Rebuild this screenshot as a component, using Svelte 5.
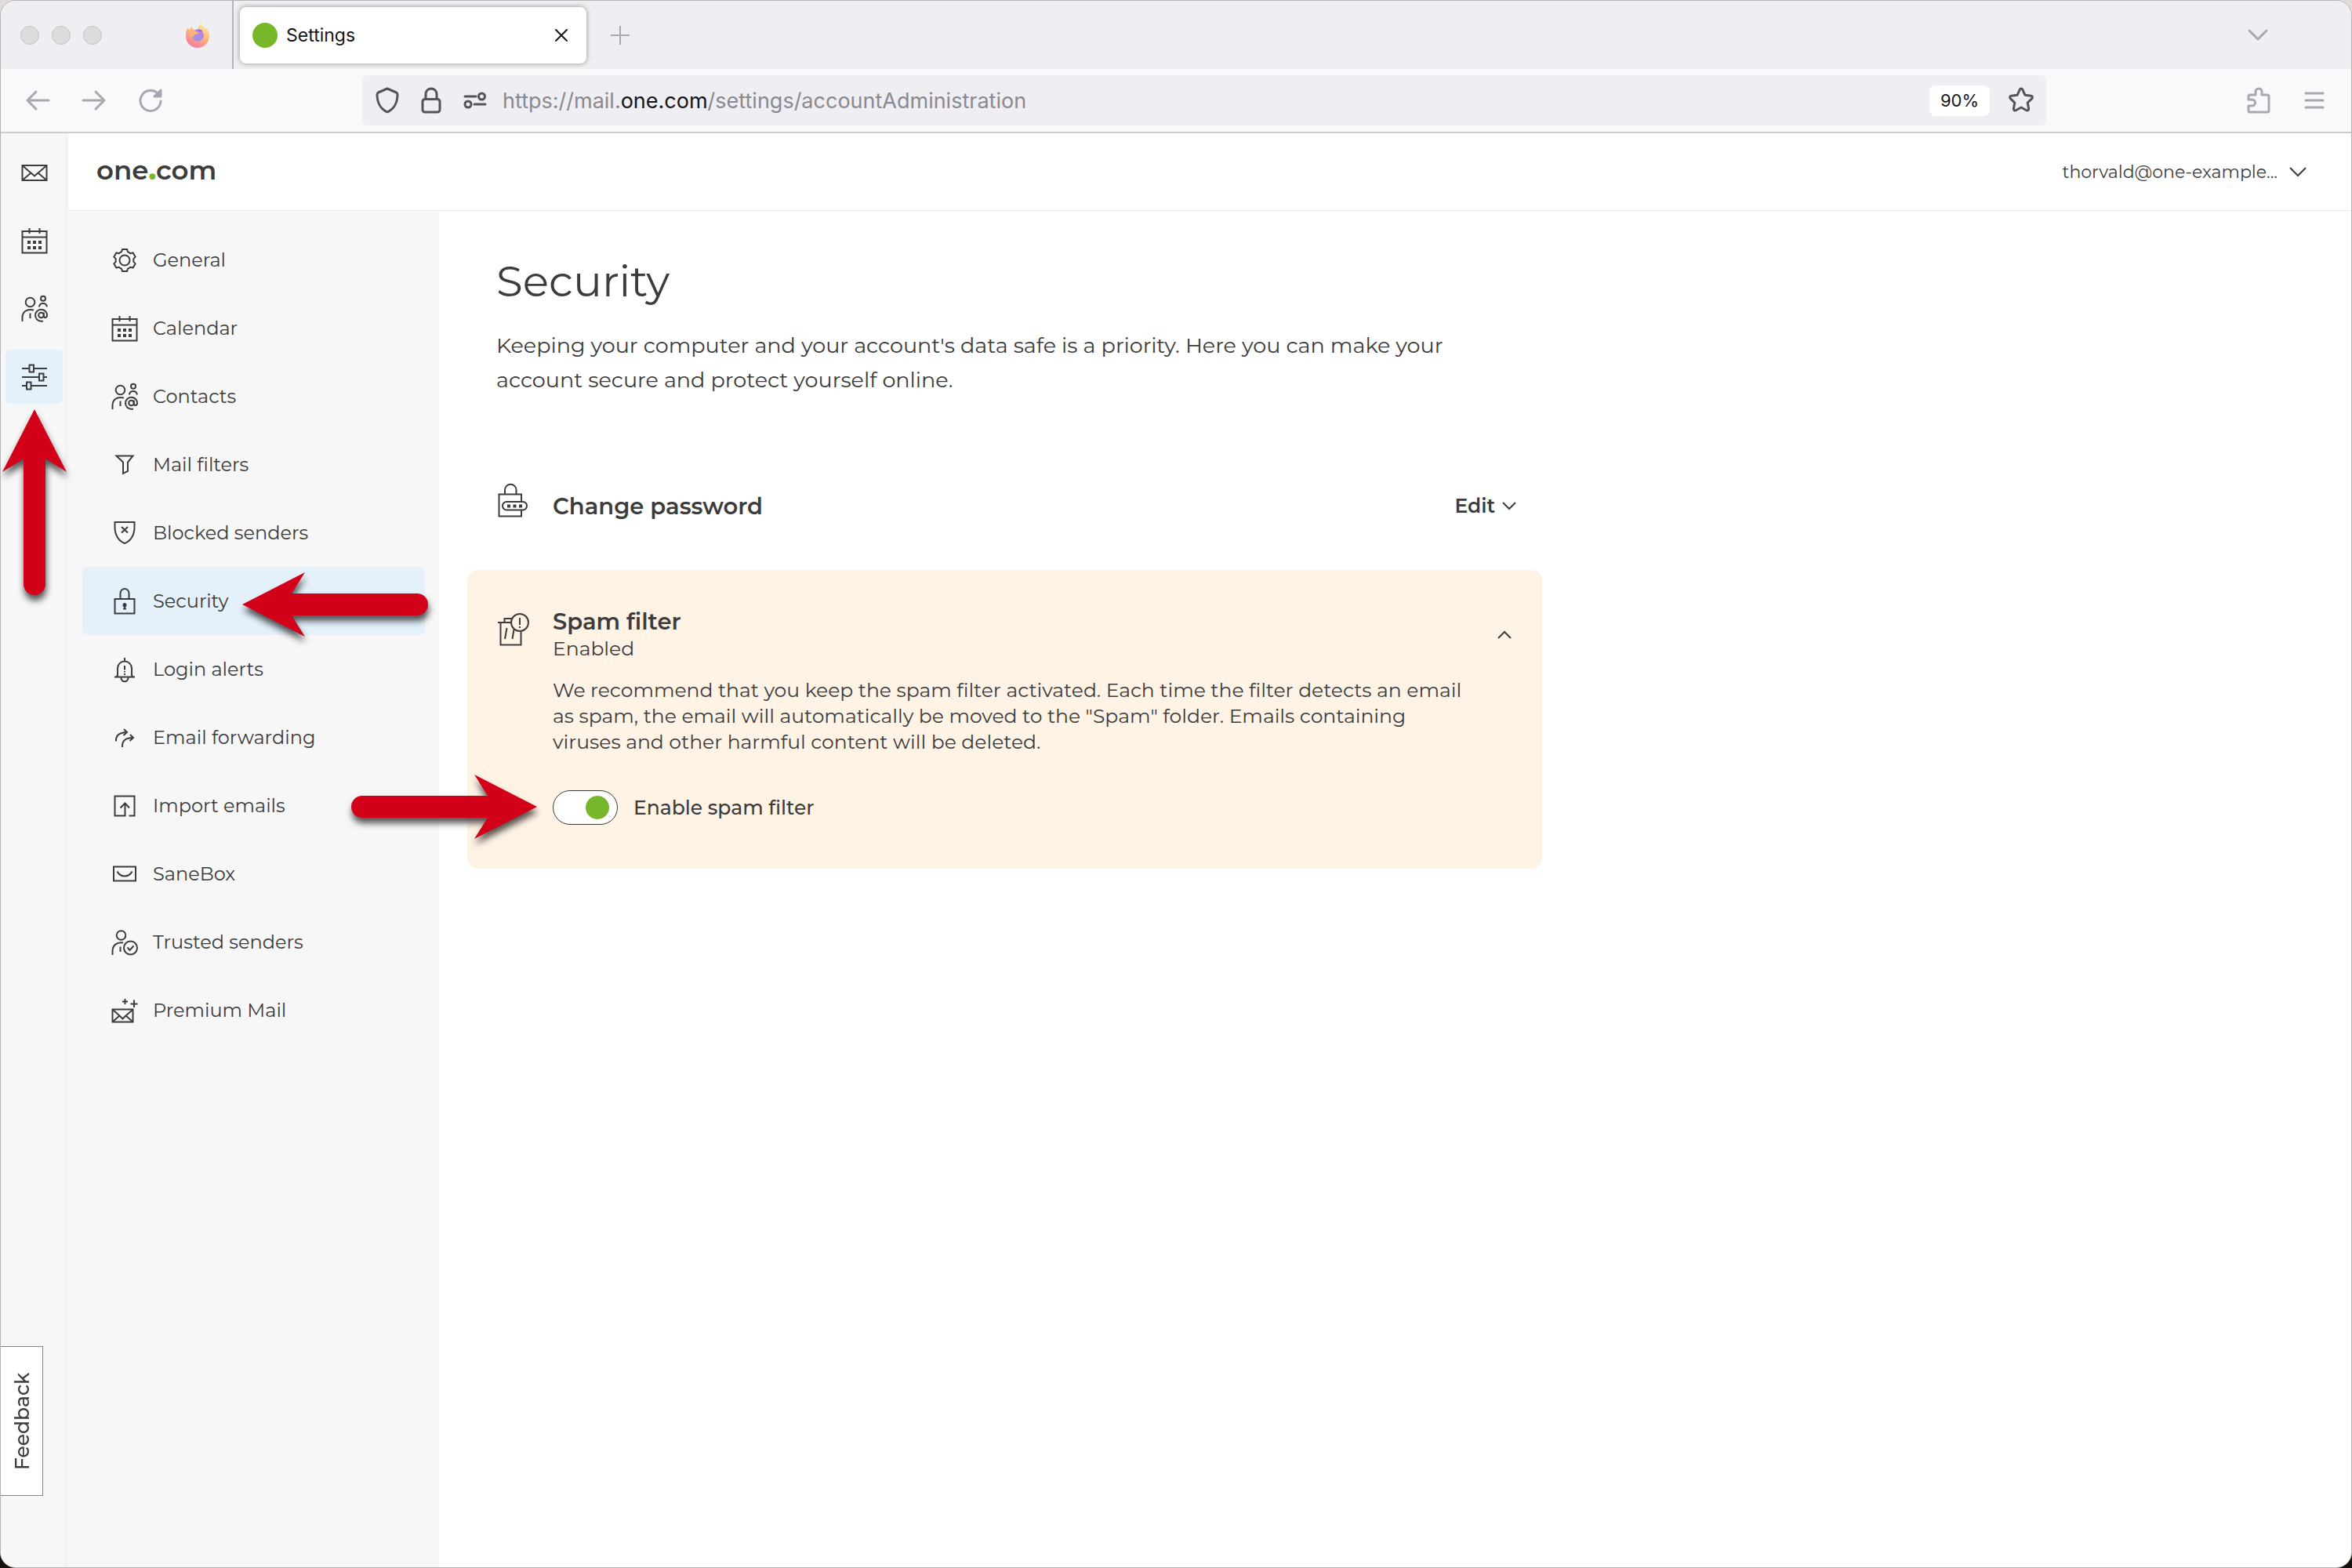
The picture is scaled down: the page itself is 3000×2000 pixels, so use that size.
<script lang="ts">
  const envelope =
    '<rect x="2.5" y="9" width="31" height="19"/><path d="M3 9.500l12 10.500M33 9.500L21 20M3 27.500l10.500-9M33 27.500l-10.500-9M13.500 18.500l4.500 4 4.500-4"/>';

  const icons: Record<string, string> = {
    mail: envelope,
    general:
      '<path d="M15 4h6l1 3.200 3.350 1.940 3.270-.740 3 5.200-2.270 2.460v3.880l2.270 2.460-3 5.200-3.270-.740L22 28.800 21 32h-6l-1-3.200-3.350-1.940-3.270.740-3-5.200 2.270-2.460v-3.880L4.380 13.600l3-5.200 3.270.740L14 7.200z"/><circle cx="18" cy="18" r="6.500"/>',
    calendar:
      '<rect x="2.500" y="6" width="31" height="27.500"/><path d="M2.500 13.500h31M11.500 2v7M24.500 2v7"/><path class="dots" d="M9 18h4v4H9zM16 18h4v4h-4zM23 18h4v4h-4zM9 25h4v4H9zM16 25h4v4h-4zM23 25h4v4h-4z"/>',
    contacts:
      '<circle cx="12.500" cy="9.500" r="5.800"/><circle cx="29" cy="4.800" r="3"/><path d="M24 15.500c0-6 9.800-6 9.800 0M2.500 34v-4.500c0-8 5.500-12 14.500-10M12.500 23.500V30"/><circle cx="26.500" cy="26" r="3.300"/><path d="M29.800 22.500V27c0 3 4.200 2.500 4.200-1a7.500 7.500 0 1 0-7.500 7.700H29"/>',
    settings:
      '<path d="M2 7h9M17 7h17M2 18h21.500M30 18h4M2 29h6M14 29h20"/><rect x="11.500" y="2.500" width="5.500" height="9"/><rect x="24" y="13.500" width="5.500" height="9"/><rect x="8" y="24.500" width="5.500" height="9"/>',
    filters: '<path d="M7.500 6.500h21l-6.500 8V26l-6 3V14.500z"/>',
    blocked:
      '<path d="M5.500 4h25v6.500c0 10-5 18-12.500 20.500C10.500 28.500 5.500 20.500 5.500 10.500z"/><path d="M14 10l8 7.500M22 10l-8 7.500"/>',
    security:
      '<rect x="5.500" y="15" width="25" height="18.500"/><path d="M12.500 15V7.500a5.500 5.500 0 0 1 11 0V15"/><path class="dots" d="M18 20a2.800 2.800 0 0 1 1.200 5.200V27H20v1.500h-4V27h.8v-1.800A2.800 2.800 0 0 1 18 20z"/>',
    alerts:
      '<path d="M5 27.500h26M18 3v4.500M6 27.500c2 0 3-1 3-3V16.500a9 9 0 0 1 18 0v8c0 2 1 3 3 3M13.500 28c0 7 9 7 9 0M18 13v5.500M18 20v1.500M18 23v2"/>',
    forwarding:
      '<path d="M7 22.500C6.500 15 11 11.500 20.500 11M17 7l4 4-4.500 4M15 30c-.5-8 4-12 13.500-12M25 14l4 4-4.500 4"/>',
    imports: '<path d="M23.500 30.500h7v-25h-25v25h13V15M12.500 20.500l6-6 5.500 6"/>',
    sanebox: '<rect x="4" y="8.500" width="28" height="18"/><path d="M8.500 14.500c4 8 15 8 19 0"/>',
    trusted:
      '<circle cx="13.500" cy="9" r="5.800"/><path d="M2.500 34v-4.500c0-8 5.500-12 13.500-11M12.500 23.500V30"/><circle cx="25.500" cy="25" r="8.500"/><path d="M21.500 24.500l3 3.500 5-5.500"/>',
    premium:
      '<rect x="2.500" y="16.500" width="26" height="16"/><path d="M3 17l9.500 8.500M28 17l-9.500 8.500M3 32l8.500-7.500M28 32l-8.500-7.500M11.500 24.500l4 4 4-4M18.500 3v7M15 6.500h7M30 4.500v9.500M25.500 9.500h9"/>',
  };

  const apps = [
    { icon: "mail", label: "Mail" },
    { icon: "calendar", label: "Calendar" },
    { icon: "contacts", label: "Contacts" },
    { icon: "settings", label: "Settings" },
  ];

  const sections = [
    { icon: "general", label: "General" },
    { icon: "calendar", label: "Calendar" },
    { icon: "contacts", label: "Contacts" },
    { icon: "filters", label: "Mail filters" },
    { icon: "blocked", label: "Blocked senders" },
    { icon: "security", label: "Security" },
    { icon: "alerts", label: "Login alerts" },
    { icon: "forwarding", label: "Email forwarding" },
    { icon: "imports", label: "Import emails" },
    { icon: "sanebox", label: "SaneBox" },
    { icon: "trusted", label: "Trusted senders" },
    { icon: "premium", label: "Premium Mail" },
  ];

  let currentApp = $state("settings");
  let currentSection = $state("security");
  let spamFilter = $state(true);
  let spamOpen = $state(true);
</script>

{#snippet icon(name: string)}
  <svg class="icon" viewBox="0 0 36 36" aria-hidden="true">{@html icons[name]}</svg>
{/snippet}

{#snippet arrow(direction: string)}
  <span class="arrow {direction}">
    <svg viewBox="0 0 237 82" aria-hidden="true">
      <path d="M237 41L157 0l17 27H14a14 14 0 0 0 0 28h160l-17 27z" />
    </svg>
  </span>
{/snippet}

<div class="window">
  <div class="tabs">
    <div class="lights"><i></i><i></i><i></i></div>
    <svg class="firefox" viewBox="0 0 32 34" aria-hidden="true">
      <defs>
        <linearGradient id="flame" x1="0.8" y1="0" x2="0.3" y2="1">
          <stop offset="0" stop-color="#fdf29a" />
          <stop offset="0.45" stop-color="#fcbb80" />
          <stop offset="0.75" stop-color="#fa938f" />
          <stop offset="1" stop-color="#f279a8" />
        </linearGradient>
        <linearGradient id="globe" x1="0.7" y1="0" x2="0.3" y2="1">
          <stop offset="0" stop-color="#c07fe8" />
          <stop offset="1" stop-color="#9b93e0" />
        </linearGradient>
      </defs>
      <path
        fill="url(#flame)"
        d="M4 7c.3 1.500 1 2.600 2 3.200C6.500 8.500 7.300 7 8.500 6c.3 1.800 1.200 3 2.800 3.800h5.200C17 6 18.300 3 20.500 1c.8 3.500 3.600 5.500 6 8 .1-1 0-1.800-.3-2.600C29.600 9.400 31 13.500 31 18c0 8.500-6.700 15-15 15S1 26.500 1 18c0-4.500.8-8 3-11z"
      />
      <circle cx="16.500" cy="17" r="7.500" fill="url(#globe)" />
      <path fill="#fcb277" d="M5 11c3-1.500 7-1 9 1.500l4 .5c-.5 1.800-2.500 2.600-5 3-.8 1.500-2.500 2-4 3.500L5 17z" />
      <path fill="#9a6fe0" d="M15 10c2.500-1 5.500-.500 7.500 1.500l-4 1z" />
    </svg>
    <div class="tab">
      <span class="favicon"></span>
      <span class="tab-title">Settings</span>
      <button aria-label="Close tab">
        <svg width="18" height="18" viewBox="0 0 18 18"><path d="M2 2l14 14M16 2L2 16" /></svg>
      </button>
    </div>
    <button class="new-tab" aria-label="New tab">
      <svg width="24" height="24" viewBox="0 0 24 24"><path d="M12 0v24M0 12h24" /></svg>
    </button>
    <button class="all-tabs" aria-label="List all tabs">
      <svg width="26" height="16" viewBox="0 0 26 16"><path d="M2 2l11 11L24 2" /></svg>
    </button>
  </div>

  <div class="toolbar">
    <div class="history">
      <button aria-label="Back">
        <svg width="32" height="32" viewBox="0 0 32 32"><path d="M30 16H3M14 5L3 16l11 11" /></svg>
      </button>
      <button aria-label="Forward">
        <svg width="32" height="32" viewBox="0 0 32 32"><path d="M2 16h27M18 5l11 11-11 11" /></svg>
      </button>
      <button aria-label="Reload">
        <svg width="32" height="32" viewBox="0 0 32 32">
          <path d="M29 17a13 13 0 1 1-4-10" />
          <path class="fill" d="M29 3v8h-8z" />
        </svg>
      </button>
    </div>
    <div class="address">
      <svg width="30" height="34" viewBox="0 0 30 34">
        <path d="M15 2l11.500 5c1 .5 1.500 1.200 1.500 2.500C28 19 24 28 15 32 6 28 2 19 2 9.500 2 8.200 2.500 7.500 3.500 7z" />
      </svg>
      <svg width="26" height="34" viewBox="0 0 26 34">
        <rect x="2" y="15.500" width="22" height="16.500" rx="3" />
        <path d="M6 15V9a7 7 0 0 1 14 0v6" />
      </svg>
      <svg class="permissions" width="30" height="22" viewBox="0 0 30 22">
        <path d="M2 6h14M14 16h14" />
        <circle cx="23.500" cy="6" r="4" />
        <circle cx="6" cy="16" r="4" />
      </svg>
      <span class="url">https://mail.<b>one.com</b>/settings/accountAdministration</span>
      <button class="zoom">90%</button>
      <button aria-label="Bookmark this page">
        <svg width="34" height="34" viewBox="0 0 34 34">
          <path
            d="M15.300 3.200c.7-1.500 2.700-1.500 3.400 0l3.300 7.100 7.700 1c1.700.2 2.300 2.100 1.100 3.300l-5.600 5.400 1.400 7.700c.3 1.600-1.300 2.800-2.800 2L17 26l-6.800 3.700c-1.500.8-3.100-.4-2.800-2L8.800 20l-5.600-5.400c-1.200-1.200-.6-3.100 1.100-3.300l7.700-1z"
          />
        </svg>
      </button>
    </div>
    <div class="menu">
      <button aria-label="Extensions">
        <svg width="30" height="34" viewBox="0 0 30 34">
          <path
            d="M2 12c0-1.500.8-2 2-2h7V6a4 4 0 0 1 8 0v4h7c1.200 0 2 .8 2 2v18c0 1.200-.8 2-2 2H4c-1.200 0-2-.8-2-2v-6h4.500a4 4 0 0 0 0-8H2z"
          />
        </svg>
      </button>
      <button aria-label="Open application menu">
        <svg width="26" height="22" viewBox="0 0 26 22"><path d="M2 2h22M2 11h22M2 20h22" /></svg>
      </button>
    </div>
  </div>

  <div class="app">
    <nav class="rail" aria-label="Apps">
      {#each apps as app}
        <button
          class:active={app.icon === currentApp}
          aria-label={app.label}
          onclick={() => (currentApp = app.icon)}
        >
          {@render icon(app.icon)}
          {#if app.icon === "settings"}
            {@render arrow("up")}
          {/if}
        </button>
      {/each}
    </nav>

    <header>
      <a class="logo" href="#home">one<span>.</span>com</a>
      <button class="account">
        thorvald@one-example...
        <svg width="24" height="14" viewBox="0 0 24 14"><path d="M2 2l10 10L22 2" /></svg>
      </button>
    </header>

    <nav class="sidebar" aria-label="Settings">
      {#each sections as section}
        <a
          href="#{section.icon}"
          class:active={section.icon === currentSection}
          onclick={() => (currentSection = section.icon)}
        >
          {@render icon(section.icon)}
          {section.label}
          {#if section.icon === "security"}
            {@render arrow("left")}
          {/if}
        </a>
      {/each}
    </nav>

    <main>
      <h1>Security</h1>
      <p class="intro">
        Keeping your computer and your account's data safe is a priority. Here you can make your
        account secure and protect yourself online.
      </p>

      <section class="panel">
        <div class="row">
          <svg class="row-icon" viewBox="0 0 44 44" aria-hidden="true">
            <path d="M32 35v7.500H3.500V14.500H32V24M11 14.500V9a7 7 0 0 1 14.500 0v5.500" />
            <rect x="8" y="24" width="31" height="10.500" rx="5.200" />
            <path class="dots" d="M14 27.500h4v4h-4zM21.500 27.500h4v4h-4zM29 27.500h4v4h-4z" />
          </svg>
          <h2>Change password</h2>
          <button class="edit">
            Edit
            <svg width="18" height="12" viewBox="0 0 18 12"><path d="M1 2l8 8 8-8" /></svg>
          </button>
        </div>
      </section>

      <section class="panel open">
        <div class="row">
          <svg class="row-icon" viewBox="0 0 44 44" aria-hidden="true">
            <path d="M2 13h17M5.500 13v28.500h26V25M10.500 13V8H20M13.500 20L11 34M22.500 22L20.500 34" />
            <circle cx="30" cy="13" r="11" />
            <path d="M30 7v9M30 18v2" />
          </svg>
          <div>
            <h2>Spam filter</h2>
            <p class="status">{spamFilter ? "Enabled" : "Disabled"}</p>
          </div>
          <button class="collapse" aria-label="Collapse" onclick={() => (spamOpen = !spamOpen)}>
            <svg width="18" height="12" viewBox="0 0 18 12"><path d="M1 10l8-8 8 8" /></svg>
          </button>
        </div>
        {#if spamOpen}
          <div class="details">
            <p>
              We recommend that you keep the spam filter activated. Each time the filter detects an email
              as spam, the email will automatically be moved to the "Spam" folder. Emails containing
              viruses and other harmful content will be deleted.
            </p>
            <label>
              <input type="checkbox" bind:checked={spamFilter} />
              Enable spam filter
              {@render arrow("right")}
            </label>
          </div>
        {/if}
      </section>
    </main>
  </div>

  <button class="feedback">Feedback</button>
</div>

<style>
  :global(body) {
    background: linear-gradient(#dedbd6 50%, #17110b 50%);
    margin: 0;
  }

  .window {
    background: #fff;
    border: 1px solid #b4b4b6;
    border-radius: 20px;
    box-sizing: border-box;
    color: #3c3c3c;
    display: flex;
    flex-direction: column;
    font-family: Montserrat, Inter, sans-serif;
    font-size: 25px;
    min-height: 100vh;
    overflow: hidden;
    position: relative;
  }

  button {
    background: none;
    border: 0;
    color: inherit;
    cursor: pointer;
    font: inherit;
    padding: 0;
  }

  a {
    color: inherit;
    text-decoration: none;
  }

  h1,
  h2,
  p {
    margin: 0;
  }

  svg {
    display: block;
    fill: none;
    flex: none;
    stroke: currentColor;
    stroke-width: 2;
  }

  svg :global(.dots) {
    fill: currentColor;
    stroke: none;
  }

  .icon {
    height: 36px;
    width: 36px;
  }

  /* browser chrome */
  .tabs {
    align-items: center;
    background: #efeef3;
    color: #a9a8b0;
    display: flex;
    font-family: Inter, sans-serif;
    height: 87px;
  }

  .tabs svg,
  .toolbar svg {
    stroke-linecap: round;
    stroke-linejoin: round;
  }

  .lights {
    display: flex;
    gap: 16px;
    padding-left: 25px;
  }

  .lights i {
    background: #dcdcdd;
    border: 1px solid #c4c4c6;
    border-radius: 50%;
    box-sizing: border-box;
    height: 24px;
    width: 24px;
  }

  .tabs .firefox {
    height: 34px;
    margin: 0 30px 0 106px;
    stroke: none;
    width: 32px;
  }

  .tab {
    align-items: center;
    background: #fff;
    border-radius: 8px;
    box-shadow: 0 0 6px #0006;
    box-sizing: border-box;
    color: #15141a;
    display: flex;
    font-size: 23px;
    gap: 11px;
    height: 72px;
    margin-left: 8px;
    padding: 0 23px 0 16px;
    position: relative;
    width: 442px;
  }

  .tab::before {
    background: #b5b4ba;
    content: "";
    height: 87px;
    left: -10px;
    position: absolute;
    top: -8px;
    width: 2px;
  }

  .favicon {
    background: #76b82a;
    border-radius: 50%;
    height: 32px;
    width: 32px;
  }

  .tab-title {
    flex: 1;
  }

  .new-tab {
    margin-left: 31px;
  }

  .all-tabs {
    margin: 0 106px 0 auto;
  }

  .all-tabs svg {
    stroke-width: 3;
  }

  .toolbar {
    align-items: center;
    background: #f9f9fb;
    border-bottom: 2px solid #cbcbcc;
    color: #a9a8b0;
    display: grid;
    font-family: Inter, sans-serif;
    grid-template-columns: 461px 1fr 389px;
    height: 80px;
  }

  .toolbar svg {
    stroke-width: 3;
  }

  .fill {
    fill: currentColor;
  }

  .history {
    display: flex;
    gap: 40px;
    padding-left: 31px;
  }

  .address {
    align-items: center;
    background: #efeef3;
    border-radius: 8px;
    color: #54535b;
    display: flex;
    gap: 28px;
    height: 64px;
    padding: 0 15px 0 17px;
  }

  .permissions {
    margin-right: -8px;
  }

  .url {
    color: #8a8990;
    flex: 1;
    font-size: 27px;
  }

  .url b {
    color: #15141a;
    font-weight: 400;
  }

  .zoom {
    background: #fff;
    border-radius: 8px;
    color: #15141a;
    font-size: 22px;
    line-height: 39px;
    margin-right: -5px;
    padding: 0 14px;
  }

  .menu {
    align-items: center;
    display: flex;
    gap: 43px;
    justify-content: flex-end;
    padding-right: 34px;
  }

  /* webmail */
  .app {
    display: grid;
    flex: 1;
    grid-template-columns: 86px 473px 1fr;
    grid-template-rows: 99px 1fr;
  }

  .rail {
    align-items: center;
    background: #f7f7f7;
    box-shadow: inset -5px 0 #f3f3f3;
    display: flex;
    flex-direction: column;
    gap: 18px;
    grid-row: 1 / 3;
    padding: 15px 7px 0 6px;
  }

  .rail button {
    border-radius: 7px;
    display: grid;
    height: 69px;
    place-items: center;
    position: relative;
    width: 73px;
  }

  .active {
    background: #e4f1fa;
  }

  header {
    align-items: center;
    border-bottom: 1px solid #ececec;
    box-sizing: border-box;
    display: flex;
    grid-column: 2 / 4;
    justify-content: space-between;
    padding: 0 56px 0 36px;
  }

  .logo {
    font-size: 34px;
    font-weight: 600;
    padding-bottom: 4px;
  }

  .logo span {
    color: #76b82a;
    font-weight: 800;
  }

  .account {
    align-items: center;
    display: flex;
    font-size: 22px;
    gap: 14px;
  }

  .sidebar {
    background: #f7f7f7;
    display: flex;
    flex-direction: column;
    font-size: 24px;
    padding: 19px 18px;
  }

  .sidebar a {
    align-items: center;
    border-radius: 7px;
    display: flex;
    gap: 18px;
    height: 87px;
    padding-left: 36px;
    position: relative;
  }

  main {
    max-width: 1371px;
    padding: 58px 36px;
  }

  h1 {
    font-size: 55px;
    font-weight: 400;
    line-height: 64px;
    padding-left: 37px;
  }

  .intro {
    font-size: 27px;
    line-height: 44px;
    margin: 28px 0 103px;
    padding: 0 90px 0 37px;
  }

  .panel {
    padding: 0 33px 0 37px;
  }

  .open {
    background: #fff3e6;
    border-radius: 14px;
    margin-top: 47px;
    padding-bottom: 56px;
    padding-top: 48px;
  }

  .row {
    align-items: center;
    display: flex;
    gap: 28px;
    height: 70px;
  }

  .row-icon {
    align-self: flex-start;
    height: 44px;
    margin-top: 6px;
    width: 44px;
  }

  h2 {
    font-size: 29px;
    font-weight: 600;
    line-height: 35px;
  }

  .status {
    line-height: 35px;
  }

  .edit {
    align-items: center;
    display: flex;
    font-weight: 600;
    gap: 9px;
    margin-left: auto;
  }

  .collapse {
    margin-left: auto;
    padding: 6px;
  }

  .details {
    line-height: 33px;
    padding: 19px 58px 0 72px;
  }

  label {
    align-items: center;
    display: flex;
    font-weight: 500;
    gap: 20px;
    margin-top: 45px;
    position: relative;
    width: fit-content;
  }

  input {
    appearance: none;
    background: #fff;
    border: 1px solid #3c3c3c;
    border-radius: 22px;
    box-sizing: border-box;
    display: flex;
    height: 44px;
    margin: 0;
    padding: 6px 10px;
    width: 83px;
  }

  input::before {
    background: #b4b4b4;
    border-radius: 50%;
    content: "";
    height: 30px;
    width: 30px;
  }

  input:checked::before {
    background: #76b82a;
    margin-left: auto;
  }

  .feedback {
    background: #fff;
    border: 1px solid #868686;
    border-right: 0;
    bottom: 91px;
    font-weight: 500;
    height: 191px;
    left: 0;
    position: absolute;
    rotate: 180deg;
    width: 54px;
    writing-mode: vertical-rl;
  }

  /* pointers laid over the page */
  .arrow {
    filter: drop-shadow(1px 7px 4px #000a);
    height: 82px;
    pointer-events: none;
    position: absolute;
    width: 237px;
    z-index: 1;
  }

  .arrow svg {
    fill: #d20019;
    height: 82px;
    stroke: none;
    width: 237px;
  }

  .up {
    height: 237px;
    left: -4px;
    top: 76px;
    width: 82px;
  }

  .up svg {
    transform: rotate(-90deg) translateX(-237px);
    transform-origin: 0 0;
  }

  .left {
    right: -4px;
    top: 7px;
  }

  .left svg {
    transform: rotate(180deg);
  }

  .right {
    right: calc(100% + 20px);
    top: -20px;
  }
</style>
